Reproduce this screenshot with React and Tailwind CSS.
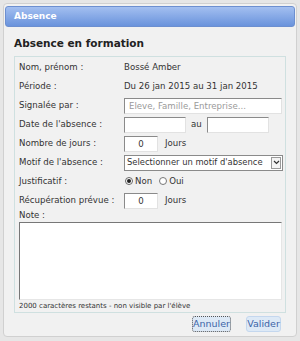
export default function App() {
  const font = { fontFamily: '"DejaVu Sans", Verdana, sans-serif' };
  const input =
    "h-[16px] bg-white border border-t-[#8a8a8a] border-l-[#8a8a8a] border-b-[#e2e2e2] border-r-[#e2e2e2] text-[8.6px] text-[#333] px-1 outline-none";

  const Row = ({ label, children }) => (
    <div className="flex items-center h-[19px]">
      <div className="w-[105px] shrink-0">{label}</div>
      <div className="flex items-center flex-1">{children}</div>
    </div>
  );

  return (
    <div
      className="w-[300px] h-[341px] bg-[#e6e6e6] p-[3px] text-[8.6px] text-[#333]"
      style={font}
    >
      <div className="h-[334px] bg-[#f1f1f1] border border-[#d0d0d0] rounded-[4px] px-[1px] pt-[2px] flex flex-col">
        {/* Title bar */}
        <div className="h-[21px] rounded-[3px] border border-[#6c8fd0] bg-gradient-to-b from-[#a3bff0] to-[#6a93dc] flex items-center px-[8px]">
          <span className="text-white font-bold text-[9px]">Absence</span>
        </div>

        <div className="pl-[9px] pr-[9px]">
          <div className="font-bold text-[10.5px] text-[#222] mt-[8px] mb-[5px] leading-[16px]">
            Absence en formation
          </div>

          <div className="border border-[#cfe0e0] pl-[4px] pr-[5px] pt-[1px] pb-[1px]">
            <Row label="Nom, prénom :">Bossé Amber</Row>
            <Row label="Période :">Du 26 jan 2015 au 31 jan 2015</Row>
            <Row label="Signalée par :">
              <input
                className={`${input} w-[158px] placeholder-[#9a9a9a]`}
                placeholder="Eleve, Famille, Entreprise..."
              />
            </Row>
            <Row label="Date de l'absence :">
              <input className={`${input} w-[62px]`} />
              <span className="mx-[5px]">au</span>
              <input className={`${input} w-[62px]`} />
            </Row>
            <Row label="Nombre de jours :">
              <input className={`${input} w-[34px] text-center`} defaultValue="0" />
              <span className="ml-[7px]">Jours</span>
            </Row>
            <Row label="Motif de l'absence :">
              <div className="w-[159px] h-[16px] bg-white border border-[#8a8a8a] flex items-center">
                <span className="flex-1 pl-[2px] whitespace-nowrap overflow-hidden text-[8.4px]">
                  Selectionner un motif d'absence
                </span>
                <span className="w-[10px] h-[12px] mr-[1px] shrink-0 border border-[#9a9a9a] bg-[#f4f4f4] flex items-center justify-center">
                  <svg width="7" height="5" viewBox="0 0 7 5">
                    <path d="M1 1L3.5 3.5L6 1" stroke="#333" strokeWidth="1.2" fill="none" />
                  </svg>
                </span>
              </div>
            </Row>
            <Row label="Justificatif :">
              <span className="ml-[1px] w-[8px] h-[8px] rounded-full border border-[#666] bg-white flex items-center justify-center">
                <span className="w-[4px] h-[4px] rounded-full bg-[#222]" />
              </span>
              <span className="ml-[2px]">Non</span>
              <span className="ml-[7px] w-[8px] h-[8px] rounded-full border border-[#777] bg-white" />
              <span className="ml-[2px]">Oui</span>
            </Row>
            <Row label="Récupération prévue :">
              <input className={`${input} w-[34px] text-center`} defaultValue="0" />
              <span className="ml-[7px]">Jours</span>
            </Row>
            <div className="leading-[11px]">Note :</div>
            <textarea className="block w-[263px] h-[78px] mt-[1px] bg-white border border-t-[#777] border-l-[#777] border-b-[#e6e6e6] border-r-[#e6e6e6] resize-none outline-none" />
            <div className="text-[7px] leading-[10px] mt-[1px]">
              2000 caractères restants - non visible par l'élève
            </div>
          </div>

          <div className="flex justify-end gap-[15px] mt-[3px] pr-[5px]">
            <button className="w-[39px] h-[16px] rounded-[3px] bg-[#dde9f6] border border-dotted border-[#555] text-[#3c64a6] text-[9.5px]">
              Annuler
            </button>
            <button className="w-[35px] h-[16px] rounded-[3px] bg-[#dde9f6] border border-[#c4d7ee] text-[#3c64a6] text-[9.5px]">
              Valider
            </button>
          </div>
        </div>
      </div>
    </div>
  );
}
